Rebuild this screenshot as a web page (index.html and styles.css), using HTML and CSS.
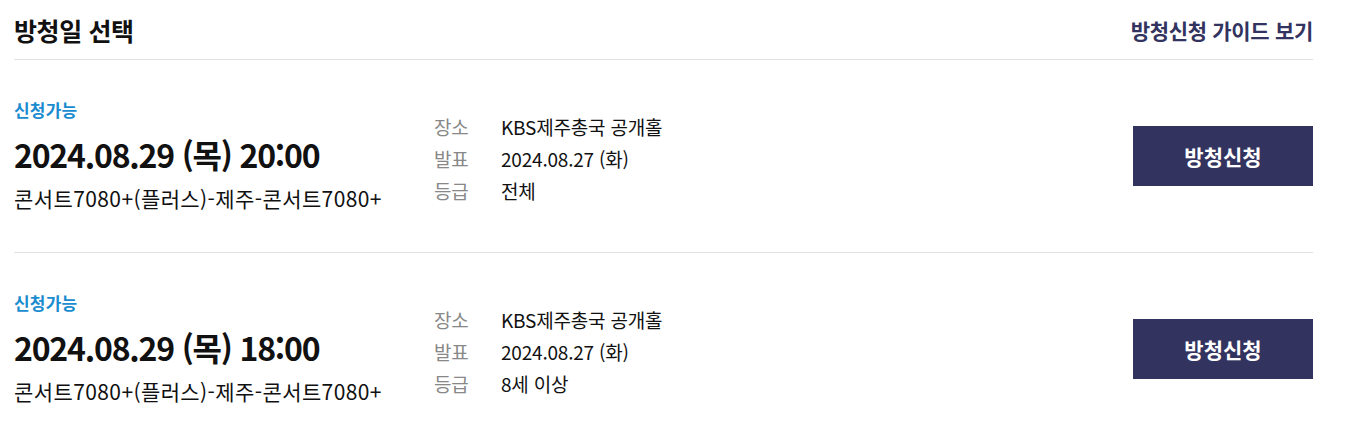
FILE: index.html
```html
<!DOCTYPE html>
<html lang="ko">
<head>
  <meta charset="UTF-8" />
  <meta name="viewport" content="width=device-width, initial-scale=1.0" />
  <title>방청일 선택</title>
  <link rel="stylesheet" href="styles.css">
</head>
<body>
  <section class="schedule">
    <header class="schedule-head">
      <h2>방청일 선택</h2>
      <a class="guide-link" href="#">방청신청 가이드 보기</a>
    </header>

    <ul class="show-list">
      <li class="show">
        <div class="show-main">
          <p class="status">신청가능</p>
          <p class="show-date">2024.08.29 (목) 20:00</p>
          <p class="show-title">콘서트7080+(플러스)-제주-콘서트7080+</p>
        </div>
        <dl class="show-info">
          <dt>장소</dt><dd>KBS제주총국 공개홀</dd>
          <dt>발표</dt><dd>2024.08.27 (화)</dd>
          <dt>등급</dt><dd>전체</dd>
        </dl>
        <button class="apply-btn" type="button">방청신청</button>
      </li>
      <li class="show">
        <div class="show-main">
          <p class="status">신청가능</p>
          <p class="show-date">2024.08.29 (목) 18:00</p>
          <p class="show-title">콘서트7080+(플러스)-제주-콘서트7080+</p>
        </div>
        <dl class="show-info">
          <dt>장소</dt><dd>KBS제주총국 공개홀</dd>
          <dt>발표</dt><dd>2024.08.27 (화)</dd>
          <dt>등급</dt><dd>8세 이상</dd>
        </dl>
        <button class="apply-btn" type="button">방청신청</button>
      </li>
    </ul>
  </section>
</body>
</html>
```

FILE: styles.css
```css
:root {
  --navy: #33335f;
  --line: #e2e2e2;
  --status: #1a8ccf;
  --text: #111;
}

body {
  margin: 0;
  background: #fff;
  font-family: "Noto Sans CJK KR", "Noto Sans", sans-serif;
  color: var(--text);
}

.schedule {
  width: 1299px;
  margin-left: 14px;
}

.schedule-head {
  display: flex;
  justify-content: space-between;
  align-items: center;
  height: 59px;
  border-bottom: 1px solid var(--line);
}

.schedule-head h2 {
  margin: 0;
  font-size: 25px;
  font-weight: 700;
  letter-spacing: -0.4px;
}

.guide-link {
  color: var(--navy);
  font-size: 21px;
  font-weight: 700;
  text-decoration: none;
  letter-spacing: -0.3px;
}

.show-list {
  list-style: none;
  margin: 0;
  padding: 0;
}

.show {
  display: flex;
  align-items: center;
  height: 192px;
  border-bottom: 1px solid var(--line);
}

.show:last-child {
  border-bottom: 0;
}

.show-main {
  width: 420px;
}

.show-main p {
  margin: 0;
}

.status {
  color: var(--status);
  font-size: 17px;
  font-weight: 700;
  line-height: 22px;
  letter-spacing: 0.2px;
}

.show-main .show-date {
  margin-top: 11px;
  font-size: 32px;
  font-weight: 700;
  line-height: 44px;
  letter-spacing: -1.2px;
}

.show-main .show-title {
  margin-top: 7px;
  font-size: 21px;
  line-height: 30px;
  letter-spacing: 0.4px;
}

.show-info {
  display: grid;
  grid-template-columns: 67px auto;
  row-gap: 4px;
  margin: 6px 0 0;
  flex: 1;
  font-size: 19px;
  line-height: 28px;
  letter-spacing: -0.2px;
}

.show-info dt {
  color: #888;
}

.show-info dd {
  margin: 0;
}

.apply-btn {
  width: 180px;
  height: 60px;
  border: 0;
  background: var(--navy);
  color: #fff;
  font-family: inherit;
  font-size: 21px;
  font-weight: 700;
  cursor: pointer;
}
```
